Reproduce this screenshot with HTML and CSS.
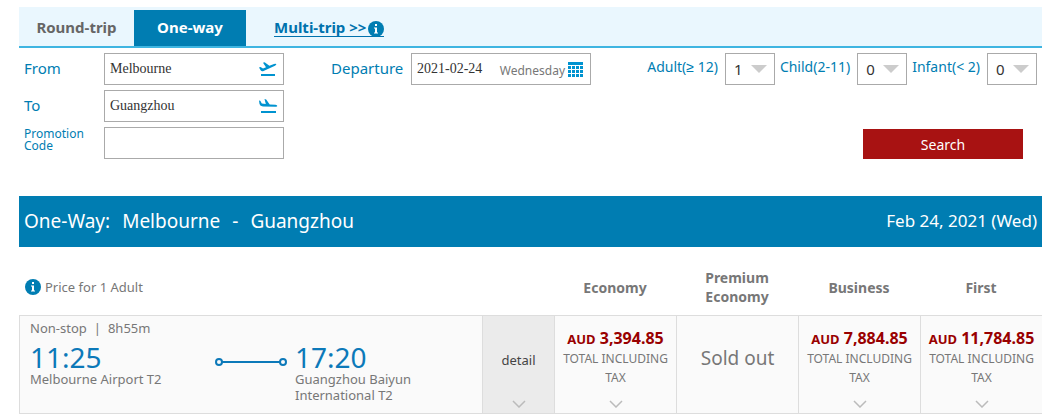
FILE: index.html
```html
<!DOCTYPE html>
<html lang="en">
<head>
    <meta charset="UTF-8">
    <meta name="viewport" content="width=device-width, initial-scale=1.0">
    <title>Flight Search</title>
    <link rel="stylesheet" href="styles.css">
</head>
<body>
    <main>
        <nav class="tabs">
            <a href="#" class="tab">Round-trip</a>
            <a href="#" class="tab active">One-way</a>
            <a href="#" class="multi-trip">Multi-trip &gt;&gt;<svg class="info" viewBox="0 0 16 16"><circle cx="8" cy="8" r="8"/><path d="M7 3h2v2H7zM6 6.500h3v5h1v1H6v-1h1v-4H6z"/></svg></a>
        </nav>

        <form class="search">
            <div class="places">
                <label for="from">From</label>
                <div class="field">
                    <input type="text" id="from" value="Melbourne">
                    <svg class="plane" viewBox="0 0 20 16"><path d="M1 6.500l1.500-.5 2.500 1.500 3-1.200-3-4.600 1.600-.5 4.800 3.600 4.600-1.900q1.800-.6 2.300.2.300.9-1.300 1.600L5 10.200q-1.400.4-2.200-.6z"/><path d="M3 13h14v2H3z"/></svg>
                </div>
                <label for="to">To</label>
                <div class="field">
                    <input type="text" id="to" value="Guangzhou">
                    <svg class="plane" viewBox="0 0 20 16"><path d="M1 2.500l1.300.3 1.500 2.700 4 .6L6.500 1l1.700.4 3.500 5.100 5.800.3q1.800.2 1.800 1.200-.1.900-1.600.8L5 8.500Q2 8 1.500 6z"/><path d="M3 13h15v2H3z"/></svg>
                </div>
                <label for="promo" class="small">Promotion Code</label>
                <div class="field">
                    <input type="text" id="promo">
                </div>
            </div>

            <div class="date">
                <label for="departure">Departure</label>
                <div class="field">
                    <input type="text" id="departure" value="2021-02-24">
                    <span class="weekday">Wednesday</span>
                    <svg class="calendar" viewBox="0 0 15 15"><path d="M0 0h15v3H0zM0 4h3v3H0zM4 4h3v3H4zM8 4h3v3H8zM12 4h3v3h-3zM0 8h3v3H0zM4 8h3v3H4zM8 8h3v3H8zM12 8h3v3h-3zM0 12h3v3H0zM4 12h3v3H4zM8 12h3v3H8zM12 12h3v3h-3z"/></svg>
                </div>
            </div>

            <div class="options">
                <div class="passengers">
                    <label for="adult">Adult(≥ 12)</label>
                    <div class="count">
                        <select id="adult"><option>0</option><option selected>1</option><option>2</option></select>
                    </div>
                    <label for="child">Child(2-11)</label>
                    <div class="count">
                        <select id="child"><option>0</option><option>1</option><option>2</option></select>
                    </div>
                    <label for="infant">Infant(&lt; 2)</label>
                    <div class="count">
                        <select id="infant"><option>0</option><option>1</option></select>
                    </div>
                </div>
                <button type="submit" class="search-button">Search</button>
            </div>
        </form>

        <header class="route">
            <h1><span>One-Way:</span><span>Melbourne</span><span>-</span><span>Guangzhou</span></h1>
            <p>Feb 24, 2021 (Wed)</p>
        </header>

        <table class="flights">
            <thead>
                <tr>
                    <th class="price-note" colspan="2">
                        <div><svg class="info" viewBox="0 0 16 16"><circle cx="8" cy="8" r="8"/><path d="M7 3h2v2H7zM6 6.500h3v5h1v1H6v-1h1v-4H6z"/></svg>Price for 1 Adult</div>
                    </th>
                    <th class="cabin">Economy</th>
                    <th class="cabin">Premium Economy</th>
                    <th class="cabin">Business</th>
                    <th class="cabin">First</th>
                </tr>
            </thead>
            <tbody>
                <tr>
                    <td class="flight">
                        <p class="duration"><span>Non-stop</span><span>|</span><span>8h55m</span></p>
                        <div class="legs">
                            <div class="stop">
                                <p class="time">11:25</p>
                                <p>Melbourne Airport T2</p>
                            </div>
                            <svg class="leg-line" viewBox="0 0 72 8"><path d="M6 4h60"/><circle cx="4" cy="4" r="3"/><circle cx="68" cy="4" r="3"/></svg>
                            <div class="stop">
                                <p class="time">17:20</p>
                                <p>Guangzhou Baiyun International T2</p>
                            </div>
                        </div>
                    </td>
                    <td class="detail">
                        <button type="button" class="cell">
                            <span>detail</span>
                            <svg class="arrow" viewBox="0 0 14 8"><path d="M1 1l6 6 6-6"/></svg>
                        </button>
                    </td>
                    <td class="fare">
                        <button type="button" class="cell">
                            <strong><small>AUD</small> 3,394.85</strong>
                            <span>TOTAL INCLUDING TAX</span>
                            <svg class="arrow" viewBox="0 0 14 8"><path d="M1 1l6 6 6-6"/></svg>
                        </button>
                    </td>
                    <td class="sold-out">Sold out</td>
                    <td class="fare">
                        <button type="button" class="cell">
                            <strong><small>AUD</small> 7,884.85</strong>
                            <span>TOTAL INCLUDING TAX</span>
                            <svg class="arrow" viewBox="0 0 14 8"><path d="M1 1l6 6 6-6"/></svg>
                        </button>
                    </td>
                    <td class="fare">
                        <button type="button" class="cell">
                            <strong><small>AUD</small> 11,784.85</strong>
                            <span>TOTAL INCLUDING TAX</span>
                            <svg class="arrow" viewBox="0 0 14 8"><path d="M1 1l6 6 6-6"/></svg>
                        </button>
                    </td>
                </tr>
            </tbody>
        </table>
    </main>
</body>
</html>
```

FILE: styles.css
```css
* {
    box-sizing: border-box;
}

body {
    font-family: "Noto Sans", sans-serif;
    font-size: 13px;
    color: #777;
    background-color: white;
    margin: 0;
}

main {
    padding: 7px 0 6px 19px;
}

h1, p {
    margin: 0;
    font-weight: normal;
}

input, select, button {
    font-family: inherit;
    margin: 0;
    padding: 0;
    border: none;
    background: none;
}

/* Tabs */
.tabs {
    display: flex;
    align-items: flex-end;
    height: 41px;
    background-color: #eaf7fe;
    border-bottom: 2px solid #3fb5e1;
}

.tab, .multi-trip {
    font-size: 15px;
    font-weight: bold;
    text-decoration: none;
}

.tab {
    width: 112px;
    height: 36px;
    line-height: 34px;
    text-align: center;
    color: #666;
}

.tab:first-child {
    width: 115px;
}

.tab.active {
    color: white;
    background-color: #007db2;
}

.multi-trip {
    display: flex;
    align-items: center;
    height: 20px;
    margin: 0 0 9px 28px;
    color: #0072ad;
    border-bottom: 1px solid #0072ad;
}

.info {
    width: 16px;
    height: 16px;
    fill: #007db2;
}

.info path {
    fill: white;
}

.multi-trip .info {
    margin: 4px 0 0 2px;
}

/* Search form */
.search {
    display: flex;
    padding: 5px 5px 0;
    margin-bottom: 37px;
    color: #007db2;
}

.places {
    display: grid;
    grid-template-columns: 80px 180px;
    gap: 5px 0;
}

.places label, .date label {
    font-size: 15px;
    line-height: 30px;
}

.places .small {
    font-size: 12px;
    line-height: 12px;
    padding-top: 1px;
}

.field {
    display: flex;
    align-items: center;
    width: 180px;
    height: 32px;
    padding: 0 5px;
    border: 1px solid #aaa;
}

.field input {
    flex: 1;
    min-width: 0;
    font-family: "Liberation Serif", serif;
    font-size: 14px;
    color: #333;
}

.plane {
    width: 20px;
    height: 16px;
    fill: #0093d0;
}

.date {
    display: flex;
    margin-left: 47px;
}

.date label {
    width: 80px;
}

.weekday {
    margin: 3px 3px 0 0;
    font-size: 12px;
    color: #777;
}

.calendar {
    width: 15px;
    height: 15px;
    margin-right: 2px;
    fill: #0093d0;
}

.options {
    display: flex;
    flex-direction: column;
    justify-content: space-between;
    align-items: flex-end;
    margin-left: auto;
}

.passengers {
    display: flex;
}

.passengers label {
    margin-right: 7px;
    font-size: 14px;
    line-height: 27px;
}

.count {
    position: relative;
    width: 50px;
    height: 32px;
    margin-right: 5px;
    border: 1px solid #aaa;
}

.count:last-child {
    margin-right: 0;
}

.count::after {
    content: "";
    position: absolute;
    top: 11px;
    right: 7px;
    border: 8px solid transparent;
    border-top-color: #ccc;
    border-bottom: none;
    pointer-events: none;
}

select {
    width: 100%;
    height: 30px;
    padding-left: 8px;
    font-size: 15px;
    color: #333;
    appearance: none;
}

.search-button {
    width: 160px;
    height: 30px;
    margin-right: 14px;
    font-size: 14px;
    color: white;
    background-color: #a81212;
}

/* Selected route */
.route {
    display: flex;
    justify-content: space-between;
    align-items: center;
    height: 51px;
    padding: 0 5px 2px;
    color: white;
    background-color: #007db2;
}

.route h1 {
    display: flex;
    gap: 12px;
    font-size: 19px;
}

.route p {
    font-size: 17px;
}

/* Results */
.flights {
    width: 100%;
    border-spacing: 0;
}

th {
    height: 68px;
    padding: 12px 20px 0;
    font-size: 14px;
    line-height: 19px;
}

.cabin {
    width: 122px;
}

.price-note {
    padding-left: 6px;
    font-size: 13px;
    font-weight: normal;
}

.price-note div {
    display: flex;
    align-items: center;
    gap: 4px;
}

td {
    height: 99px;
    padding: 0;
    background-color: #fafafa;
    border: solid #ddd;
    border-width: 1px 0 1px 1px;
}

.flight {
    padding: 4px 10px 0;
    line-height: 16px;
    vertical-align: top;
}

.duration {
    display: flex;
    gap: 7px;
}

.legs {
    display: flex;
    padding-top: 7px;
}

.stop {
    width: 135px;
}

.time {
    font-size: 28px;
    line-height: 28px;
    color: #0c79b9;
}

.leg-line {
    width: 72px;
    height: 8px;
    margin: 15px 8px 0 50px;
    fill: none;
    stroke: #0c79b9;
    stroke-width: 2;
}

.detail {
    width: 72px;
    background-color: #ebebeb;
}

.cell {
    display: flex;
    flex-direction: column;
    align-items: center;
    width: 100%;
    height: 97px;
    padding: 12px 0 5px;
    font-size: 12px;
    line-height: 19px;
    color: #777;
}

.detail .cell {
    padding-top: 35px;
    font-size: 13px;
    color: #444;
}

.fare span {
    width: 112px;
}

.fare strong {
    font-size: 16px;
    line-height: 20px;
    color: #900;
}

.fare small {
    font-size: 13px;
}

.arrow {
    width: 14px;
    height: 8px;
    margin-top: auto;
    fill: none;
    stroke: #bbb;
    stroke-width: 1.5;
}

.sold-out {
    padding-bottom: 14px;
    font-size: 19px;
    text-align: center;
}
```
